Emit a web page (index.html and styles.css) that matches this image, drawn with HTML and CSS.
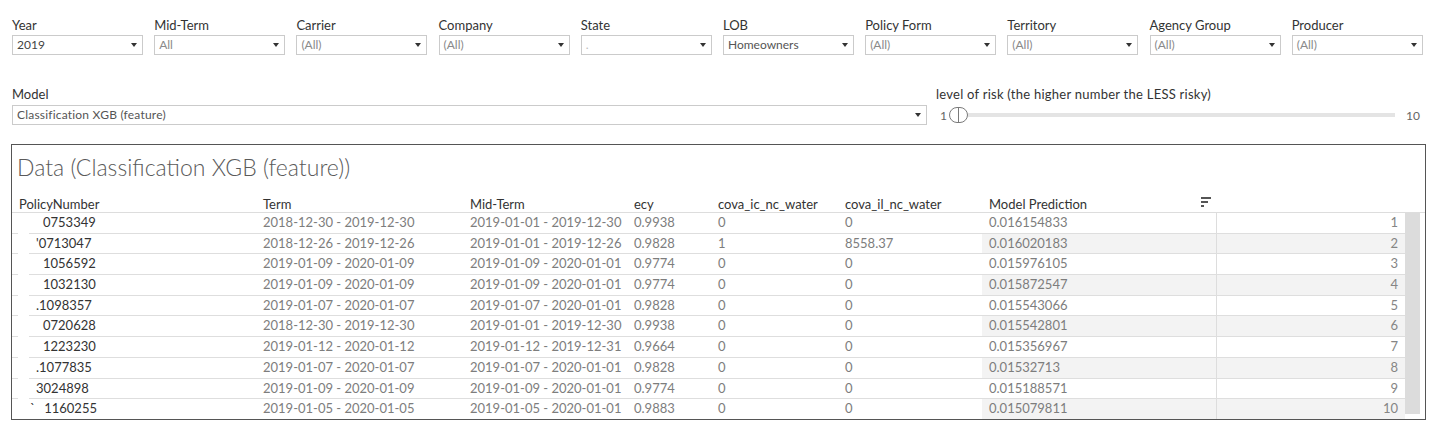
FILE: index.html
```html
<!DOCTYPE html>
<html lang="en">
<head>
<meta charset="utf-8">
<title>Data (Classification XGB (feature))</title>
<link rel="stylesheet" href="styles.css">
</head>
<body>
<div class="filters">
  <div class="filter"><div class="label">Year</div><div class="select"><span class="val dark">2019</span><span class="caret"></span></div></div>
  <div class="filter"><div class="label">Mid-Term</div><div class="select"><span class="val">All</span><span class="caret"></span></div></div>
  <div class="filter"><div class="label">Carrier</div><div class="select"><span class="val">(All)</span><span class="caret"></span></div></div>
  <div class="filter"><div class="label">Company</div><div class="select"><span class="val">(All)</span><span class="caret"></span></div></div>
  <div class="filter"><div class="label">State</div><div class="select"><span class="val faint">.</span><span class="caret"></span></div></div>
  <div class="filter"><div class="label">LOB</div><div class="select"><span class="val mid">Homeowners</span><span class="caret"></span></div></div>
  <div class="filter"><div class="label">Policy Form</div><div class="select"><span class="val">(All)</span><span class="caret"></span></div></div>
  <div class="filter"><div class="label">Territory</div><div class="select"><span class="val">(All)</span><span class="caret"></span></div></div>
  <div class="filter"><div class="label">Agency Group</div><div class="select"><span class="val">(All)</span><span class="caret"></span></div></div>
  <div class="filter"><div class="label">Producer</div><div class="select"><span class="val">(All)</span><span class="caret"></span></div></div>
</div>

<div class="row2">
  <div class="model">
    <div class="label">Model</div>
    <div class="select wide"><span class="val mid">Classification XGB (feature)</span><span class="caret"></span></div>
  </div>
  <div class="slider-wrap">
    <div class="label risk">level of risk (the higher number the LESS risky)</div>
    <div class="slider">
      <span class="smin">1</span>
      <span class="thumb"></span>
      <span class="track"></span>
      <span class="smax">10</span>
    </div>
  </div>
</div>

<div class="panel">
  <div class="title">Data (Classification XGB (feature))</div>
  <div class="thead">
    <div class="th first">PolicyNumber</div>
    <div class="th">Term</div>
    <div class="th">Mid-Term</div>
    <div class="th">ecy</div>
    <div class="th">cova_ic_nc_water</div>
    <div class="th">cova_il_nc_water</div>
    <div class="th pred"><span>Model Prediction</span>
      <svg class="sort" width="11" height="11" viewBox="0 0 11 11"><rect x="0" y="0" width="10" height="2" fill="#555"/><rect x="0" y="4" width="7" height="2" fill="#555"/><rect x="0" y="8" width="3" height="2" fill="#555"/></svg>
    </div>
    <div class="th"></div>
  </div>
  <div class="tbody">
    <div class="rows">
      <div class="tr"><div class="td pn">0753349</div><div class="td">2018-12-30 - 2019-12-30</div><div class="td">2019-01-01 - 2019-12-30</div><div class="td">0.9938</div><div class="td">0</div><div class="td">0</div><div class="td p">0.016154833</div><div class="td rk">1</div></div>
      <div class="tr"><div class="td pn"><span class="pre">'</span>0713047</div><div class="td">2018-12-26 - 2019-12-26</div><div class="td">2019-01-01 - 2019-12-26</div><div class="td">0.9828</div><div class="td">1</div><div class="td">8558.37</div><div class="td p">0.016020183</div><div class="td rk">2</div></div>
      <div class="tr"><div class="td pn">1056592</div><div class="td">2019-01-09 - 2020-01-09</div><div class="td">2019-01-09 - 2020-01-01</div><div class="td">0.9774</div><div class="td">0</div><div class="td">0</div><div class="td p">0.015976105</div><div class="td rk">3</div></div>
      <div class="tr"><div class="td pn">1032130</div><div class="td">2019-01-09 - 2020-01-09</div><div class="td">2019-01-09 - 2020-01-01</div><div class="td">0.9774</div><div class="td">0</div><div class="td">0</div><div class="td p">0.015872547</div><div class="td rk">4</div></div>
      <div class="tr"><div class="td pn"><span class="pre">.</span>1098357</div><div class="td">2019-01-07 - 2020-01-07</div><div class="td">2019-01-07 - 2020-01-01</div><div class="td">0.9828</div><div class="td">0</div><div class="td">0</div><div class="td p">0.015543066</div><div class="td rk">5</div></div>
      <div class="tr"><div class="td pn">0720628</div><div class="td">2018-12-30 - 2019-12-30</div><div class="td">2019-01-01 - 2019-12-30</div><div class="td">0.9938</div><div class="td">0</div><div class="td">0</div><div class="td p">0.015542801</div><div class="td rk">6</div></div>
      <div class="tr"><div class="td pn">1223230</div><div class="td">2019-01-12 - 2020-01-12</div><div class="td">2019-01-12 - 2019-12-31</div><div class="td">0.9664</div><div class="td">0</div><div class="td">0</div><div class="td p">0.015356967</div><div class="td rk">7</div></div>
      <div class="tr"><div class="td pn"><span class="pre">.</span>1077835</div><div class="td">2019-01-07 - 2020-01-07</div><div class="td">2019-01-07 - 2020-01-01</div><div class="td">0.9828</div><div class="td">0</div><div class="td">0</div><div class="td p">0.01532713</div><div class="td rk">8</div></div>
      <div class="tr"><div class="td pn"><span class="pre">3</span>024898</div><div class="td">2019-01-09 - 2020-01-09</div><div class="td">2019-01-09 - 2020-01-01</div><div class="td">0.9774</div><div class="td">0</div><div class="td">0</div><div class="td p">0.015188571</div><div class="td rk">9</div></div>
      <div class="tr"><div class="td pn"><span class="pre2">`</span>1160255</div><div class="td">2019-01-05 - 2020-01-05</div><div class="td">2019-01-05 - 2020-01-01</div><div class="td">0.9883</div><div class="td">0</div><div class="td">0</div><div class="td p">0.015079811</div><div class="td rk">10</div></div>
    </div>
    <div class="scrollbar"></div>
  </div>
</div>
</body>
</html>
```

FILE: styles.css
```css
* { box-sizing: border-box; }

html, body {
  margin: 0;
  background: #ffffff;
}

body {
  width: 1429px;
  height: 423px;
  overflow: hidden;
  font-family: Lato, "Liberation Sans", sans-serif;
  color: #333333;
}

/* ---------- filters ---------- */
.filters {
  display: flex;
  gap: 11.2px;
  padding: 17px 0 0 12px;
}

.filter {
  width: 131px;
  flex: none;
}

.label {
  font-size: 13px;
  line-height: 16px;
  color: #333333;
  white-space: nowrap;
}

.label.risk { letter-spacing: 0.25px; }

.select {
  margin-top: 2px;
  height: 20px;
  border: 1px solid #cbcbcb;
  background: #ffffff;
  display: flex;
  align-items: center;
  justify-content: space-between;
  padding: 0 5px 0 4px;
  font-size: 12px;
  line-height: 16px;
}

.val { color: #8a8a8a; white-space: nowrap; }
.val.dark { color: #444444; }
.val.mid { color: #555555; }
.val.faint { color: #bbbbbb; }

.select.wide .val { letter-spacing: 0.2px; }

.caret {
  width: 0;
  height: 0;
  border-left: 3px solid transparent;
  border-right: 3px solid transparent;
  border-top: 4px solid #333333;
  flex: none;
}

/* ---------- second row ---------- */
.row2 {
  display: flex;
  gap: 9px;
  padding: 31px 0 0 12px;
}

.model { width: 915px; flex: none; }
.model .select { margin-top: 3px; }

.slider-wrap { width: 484px; flex: none; }

.slider {
  margin-top: 3px;
  height: 20px;
  display: flex;
  align-items: center;
  padding-left: 4px;
  font-size: 12px;
  color: #666666;
}

.smin { width: 9px; }

.thumb {
  width: 19px;
  height: 16px;
  border: 1px solid #7a7a7a;
  border-radius: 8px;
  background: linear-gradient(#7a7a7a, #7a7a7a) center / 1px 100% no-repeat, #ffffff;
  flex: none;
}

.track {
  flex: 1;
  height: 4px;
  background: #e4e4e4;
}

.smax { margin-left: 11px; width: 14px; }

/* ---------- data panel ---------- */
.panel {
  margin: 19px 0 0 11px;
  width: 1415px;
  height: 276px;
  border: 1px solid #555555;
  overflow: hidden;
}

.title {
  padding: 9px 0 0 5px;
  font-size: 23px;
  line-height: 27px;
  font-weight: 300;
  color: #5a5a5a;
  white-space: nowrap;
}

.thead {
  display: grid;
  grid-template-columns: 244px 207px 164px 84px 127px 144px 234px 204px;
  padding-top: 15px;
  border-bottom: 1px solid #dddddd;
  height: 32px;
}

.th {
  font-size: 13px;
  line-height: 16px;
  padding-left: 7px;
  color: #333333;
  white-space: nowrap;
}

.th.pred {
  display: flex;
  justify-content: space-between;
  align-items: center;
  padding-right: 4px;
}

.sort { display: block; margin-top: -3px; }

.tbody {
  display: flex;
  align-items: flex-start;
}

.rows { width: 1393px; flex: none; }

.scrollbar {
  width: 15px;
  height: 201px;
  background: #dcdcdc;
  flex: none;
}

.tr {
  display: grid;
  grid-template-columns: 244px 207px 164px 84px 127px 144px 234px 189px;
  height: 20.7px;
}

.td {
  font-size: 13px;
  line-height: 19.7px;
  padding-left: 7px;
  color: #7d7d7d;
  border-bottom: 1px solid #dedede;
  white-space: nowrap;
  overflow: hidden;
}

.td.pn {
  padding-left: 31px;
  color: #333333;
  border-bottom: none;
  background: linear-gradient(to right, #dedede 0 6px, transparent 6px 17px, #dedede 17px) left bottom / 100% 1px no-repeat;
}

.pre { margin-left: -7px; }
.pre2 { margin-left: -13px; margin-right: 9px; }

.td.rk {
  text-align: right;
  padding-right: 7px;
  border-left: 1px solid #dddddd;
  color: #858585;
}

.tr:nth-child(even) .td.p,
.tr:nth-child(even) .td.rk {
  background: #f3f3f3;
}
```
